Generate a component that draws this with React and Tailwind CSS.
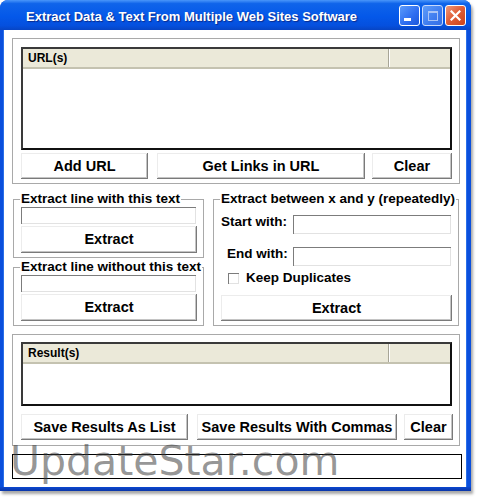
import React from "react";

function Btn({ className, children }) {
  return (
    <button
      className={
        "flex items-center justify-center bg-white text-[14.5px] font-bold text-black leading-none whitespace-nowrap shadow-[inset_-1px_-1px_0_#7a7a7a,inset_1px_1px_0_#ececec,inset_-2px_-2px_0_#c4c4c4] " +
        className
      }
    >
      {children}
    </button>
  );
}

function TextBox({ className }) {
  return (
    <div
      className={
        "bg-white shadow-[inset_1px_1px_0_#7c7c7c,inset_-1px_-1px_0_#e2e2e2] " +
        className
      }
    />
  );
}

function ListView({ title, className }) {
  return (
    <div
      className={
        "w-[431px] bg-white border-2 border-t-[#3a3a3a] border-l-[#3a3a3a] border-r-[#111] border-b-[#111] " +
        className
      }
    >
      <div className="flex h-[20px] bg-[#ebe9d9] border-b-2 border-b-[#c4c2b0]">
        <div className="w-[366px] h-full flex items-center pl-[5px] text-[12px] font-bold text-black border-r border-r-[#a7a597] shadow-[1px_0_0_#ffffff]">
          {title}
        </div>
        <div className="flex-1" />
      </div>
    </div>
  );
}

export default function App() {
  return (
    <div className="relative w-[478px] h-[497px] bg-white overflow-hidden font-['Liberation_Sans',Arial,sans-serif] text-black">
      {/* window */}
      <div className="w-[471px] h-[491px] flex flex-col rounded-t-[8px] bg-[#0a4fdc] shadow-[2px_3px_3px_rgba(0,0,0,0.35)]">
        {/* title bar */}
        <div className="h-[30px] flex items-center rounded-t-[8px] bg-[linear-gradient(180deg,#4a96fa_0%,#0f64ea_12%,#0458e9_55%,#0550de_85%,#0745c4_100%)] pl-[26px] pr-[5px]">
          <span className="mt-[3px] text-[13px] font-bold text-white whitespace-nowrap [text-shadow:1px_1px_1px_#0b2a8a]">
            Extract Data &amp; Text From Multiple Web Sites Software
          </span>
          <div className="flex-1" />
          <div className="flex gap-[2px] mt-[1px]">
            <div className="w-[21px] h-[21px] rounded-[3px] border border-white bg-[linear-gradient(135deg,#5b9bfb_0%,#2d6cf0_60%,#1d58da_100%)] flex items-end pl-[4px] pb-[4px]">
              <div className="w-[7px] h-[3px] bg-white" />
            </div>
            <div className="w-[21px] h-[21px] rounded-[3px] border border-[#c8dafc] bg-[linear-gradient(135deg,#5e9dfa_0%,#3f7cef_60%,#346ee6_100%)] flex items-center justify-center">
              <div className="w-[10px] h-[10px] border border-[#a9c4f6] border-t-2" />
            </div>
            <div className="w-[21px] h-[21px] rounded-[3px] border border-white bg-[linear-gradient(135deg,#ee9a7c_0%,#e1603a_45%,#cc4219_100%)] flex items-center justify-center">
              <svg width="11" height="11" viewBox="0 0 11 11">
                <path d="M1.5 1.5 L9.5 9.5 M9.5 1.5 L1.5 9.5" stroke="white" strokeWidth="2.2" strokeLinecap="square" />
              </svg>
            </div>
          </div>
        </div>

        {/* body */}
        <div className="h-[457px] ml-[4px] mr-[5px] bg-white pl-[8px] pt-[8px] shadow-[-1px_0_0_#2a6fe8,1px_0_0_#2a6fe8]">
          {/* URL group */}
          <div className="w-[448px] h-[146px] border border-[#a9a9a9] pt-[8px] pl-[8px]">
            <ListView title="URL(s)" className="h-[103px]" />
            <div className="flex mt-[3px]">
              <Btn className="w-[127px] h-[26px]">Add URL</Btn>
              <Btn className="w-[208px] h-[26px] ml-[9px]">Get Links in URL</Btn>
              <Btn className="w-[80px] h-[26px] ml-[7px]">Clear</Btn>
            </div>
          </div>

          {/* middle */}
          <div className="flex mt-[7px] ml-[1px]">
            <div className="flex flex-col w-[191px]">
              <fieldset className="w-[191px] h-[67px] min-w-0 border border-[#a9a9a9] px-[7px] pb-[4px]">
                <legend className="px-px -ml-px text-[13.5px] font-bold leading-[16px] whitespace-nowrap">
                  Extract line with this text
                </legend>
                <TextBox className="w-[175px] h-[17px]" />
                <Btn className="w-[176px] h-[27px] mt-[2px]">Extract</Btn>
              </fieldset>
              <fieldset className="w-[191px] h-[67px] mt-[1px] min-w-0 border border-[#a9a9a9] px-[7px] pb-[4px]">
                <legend className="px-px -ml-px text-[13.5px] font-bold leading-[16px] whitespace-nowrap">
                  Extract line without this text
                </legend>
                <TextBox className="w-[175px] h-[17px]" />
                <Btn className="w-[176px] h-[27px] mt-[2px]">Extract</Btn>
              </fieldset>
            </div>
            <fieldset className="w-[246px] h-[135px] ml-[9px] min-w-0 border border-[#a9a9a9] px-[7px] pb-[4px]">
              <legend className="px-px -ml-px text-[13.5px] font-bold leading-[16px] whitespace-nowrap">
                Extract between x and y (repeatedly)
              </legend>
              <div className="flex items-center h-[19px] mt-[8px]">
                <span className="w-[72px] mb-[4px] text-[13.5px] font-bold whitespace-nowrap">Start with:</span>
                <TextBox className="w-[159px] h-[19px]" />
              </div>
              <div className="flex items-center h-[19px] mt-[13px]">
                <span className="w-[72px] pl-[6px] mb-[4px] text-[13.5px] font-bold whitespace-nowrap">End with:</span>
                <TextBox className="w-[159px] h-[19px]" />
              </div>
              <div className="flex items-center h-[11px] mt-[7px] pl-[7px]">
                <TextBox className="w-[11px] h-[11px]" />
                <span className="ml-[7px] text-[13.5px] font-bold whitespace-nowrap">Keep Duplicates</span>
              </div>
              <Btn className="w-[231px] h-[26px] mt-[11px]">Extract</Btn>
            </fieldset>
          </div>

          {/* results group */}
          <div className="w-[448px] h-[112px] mt-[8px] border border-[#a9a9a9] pt-[7px] pl-[8px]">
            <ListView title="Result(s)" className="h-[64px]" />
            <div className="flex mt-[8px]">
              <Btn className="w-[167px] h-[26px]">Save Results As List</Btn>
              <Btn className="w-[200px] h-[26px] ml-[9px]">Save Results With Commas</Btn>
              <Btn className="w-[49px] h-[26px] ml-[7px]">Clear</Btn>
            </div>
          </div>

          {/* status box */}
          <div className="w-[450px] h-[25px] mt-[8px] border border-black bg-white" />
        </div>

        {/* bottom frame */}
        <div className="h-[4px] bg-[linear-gradient(180deg,#0a47d0_0%,#0a35a8_100%)]" />
      </div>

      {/* watermark */}
      <div className="absolute left-[10px] top-[441px] text-[41px] leading-[41px] font-['DejaVu_Sans',sans-serif] text-[rgba(60,60,60,0.55)] whitespace-nowrap pointer-events-none">
        UpdateStar.com
      </div>
    </div>
  );
}
